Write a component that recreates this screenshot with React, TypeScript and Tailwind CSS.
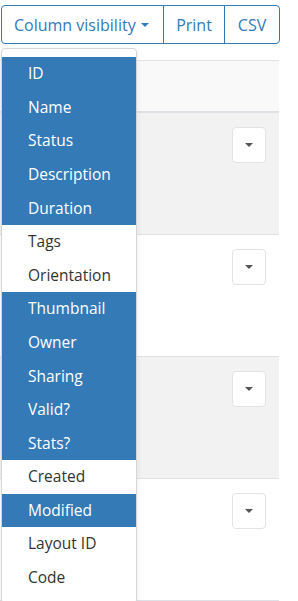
import React from 'react'

const columns = [
  { label: 'ID', on: true },
  { label: 'Name', on: true },
  { label: 'Status', on: true },
  { label: 'Description', on: true },
  { label: 'Duration', on: true },
  { label: 'Tags', on: false },
  { label: 'Orientation', on: false },
  { label: 'Thumbnail', on: true },
  { label: 'Owner', on: true },
  { label: 'Sharing', on: true },
  { label: 'Valid?', on: true },
  { label: 'Stats?', on: true },
  { label: 'Created', on: false },
  { label: 'Modified', on: true },
  { label: 'Layout ID', on: false },
  { label: 'Code', on: false },
]

const Caret = ({ className = '' }: { className?: string }) => (
  <span
    className={`inline-block h-0 w-0 border-x-[4px] border-t-[4px] border-x-transparent ${className}`}
  />
)

const RowButton = () => (
  <button className="flex h-[36px] w-[34px] items-center justify-center rounded-[4px] border border-[#e3e3e3] bg-white">
    <Caret className="border-t-[#555]" />
  </button>
)

const rows = ['bg-[#f2f2f2]', 'bg-white', 'bg-[#f2f2f2]', 'bg-white']

export default function App() {
  return (
    <div className="relative h-[601px] w-[298px] overflow-hidden bg-white font-['Open_Sans',sans-serif] text-[#333]">
      {/* Buttons */}
      <div className="pl-px pt-[5px]">
        <div className="flex h-[39px] w-[279px] rounded-[4px] border border-[#337ab7] text-[16px] text-[#337ab7]">
          <button className="flex w-[161px] items-center gap-[5px] pl-[12px]">
            Column visibility
            <Caret className="border-t-[#337ab7]" />
          </button>
          <button className="flex w-[61px] items-center justify-center border-l border-[#337ab7]">
            Print
          </button>
          <button className="flex flex-1 items-center justify-center border-l border-[#337ab7]">
            CSV
          </button>
        </div>
      </div>

      {/* Table */}
      <div className="mt-[16px] w-[279px]">
        <div className="h-[53px] border-t border-b-2 border-t-[#e3e3e3] border-b-[#dee2e6] bg-[#f9f9f9]" />
        {rows.map((bg, i) => (
          <div key={i} className={`flex h-[122px] justify-end border-b border-[#dee2e6] pr-[13px] pt-[14px] ${bg}`}>
            <RowButton />
          </div>
        ))}
      </div>

      {/* Column visibility menu */}
      <div className="absolute left-px top-[48px] w-[136px] rounded-[4px] border border-[#d6d6d6] bg-white pb-[8px] pt-[8px] shadow-[0_2px_6px_rgba(0,0,0,0.08)]">
        {columns.map((c) => (
          <div
            key={c.label}
            className={`flex h-[33.6px] items-center pl-[26px] text-[15.5px] ${c.on ? 'bg-[#337ab7] text-white' : 'text-[#333]'}`}
          >
            {c.label}
          </div>
        ))}
      </div>
    </div>
  )
}
